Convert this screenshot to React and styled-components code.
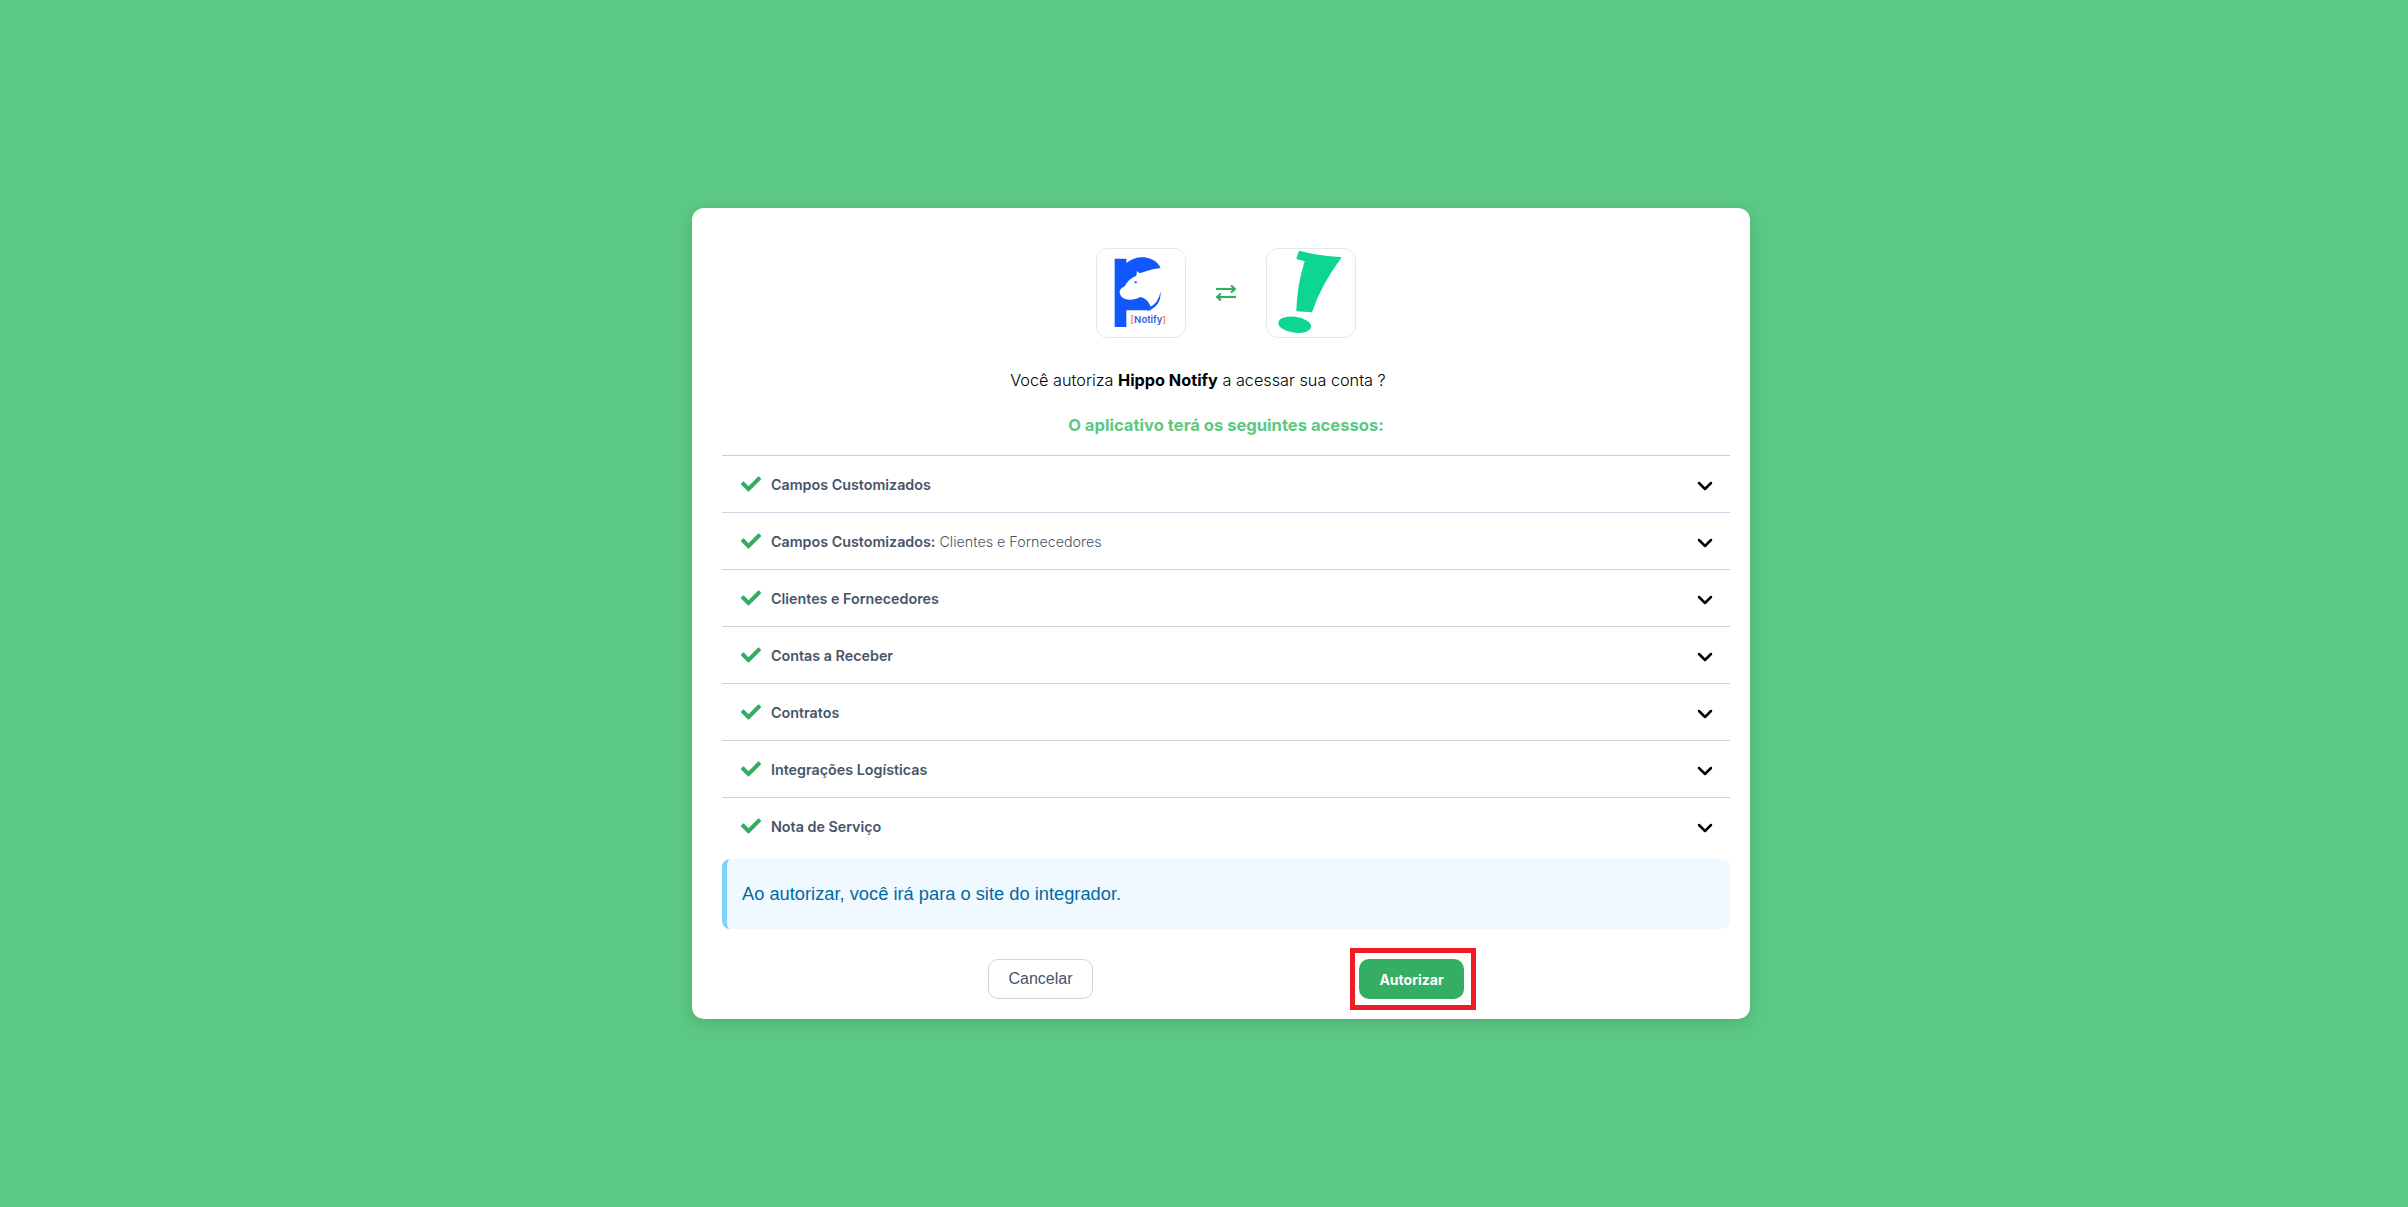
import React from 'react';
import styled, { createGlobalStyle } from 'styled-components';
import { FaCheck } from 'react-icons/fa';
import { ChevronDown } from 'lucide-react';

const GlobalStyle = createGlobalStyle`
  html, body {
    margin: 0;
    padding: 0;
    background: #5bc884;
  }
  * {
    box-sizing: border-box;
  }
`;

const permissions = [
  { title: 'Campos Customizados' },
  { title: 'Campos Customizados:', detail: 'Clientes e Fornecedores' },
  { title: 'Clientes e Fornecedores' },
  { title: 'Contas a Receber' },
  { title: 'Contratos' },
  { title: 'Integrações Logísticas' },
  { title: 'Nota de Serviço' },
];

const HippoLogo = () => (
  <svg width="88" height="88" viewBox="0 0 88 88">
    <g transform="translate(-1 -1) scale(0.3333) translate(-109 -55)">
      <path
        fill="#1058fb"
        d="M165 87 L200 87 L200 100 Q225 80 255 83 Q290 88 303 115 Q275 118 250 128 Q240 132 236 128 L232 124 L230 138 Q205 148 195 170 Q178 178 180 190 Q185 212 215 210 Q232 208 242 202 Q262 205 272 228 L272 242 L200 242 L200 292 L165 292 Z"
      />
      <path fill="#1058fb" d="M303 186 Q304 232 262 244 L270 232 Q295 222 303 186 Z" />
      <ellipse cx="228" cy="158" rx="4" ry="3" fill="#1058fb" />
    </g>
    <text x="33.5" y="73.5" fontFamily="Inter, sans-serif" fontSize="9.6" fontWeight="600" fill="#2f62e0">
      <tspan fill="#f58a52">[</tspan>Notify<tspan fill="#f58a52">]</tspan>
    </text>
  </svg>
);

const BangLogo = () => (
  <svg width="88" height="88" viewBox="0 0 88 88">
    <path
      fill="#0dd690"
      d="M32 1.7 Q52 7 74.7 8.3 Q54 36 45 63.3 L29.3 62.3 Q30 36 37.7 12.3 L29.3 10 Z"
    />
    <ellipse cx="27.7" cy="75.7" rx="16.5" ry="8" transform="rotate(8 27.7 75.7)" fill="#0dd690" />
  </svg>
);

const SwapIcon = () => (
  <svg width="20" height="16" viewBox="0 0 20 16" fill="none" stroke="#34ad62" strokeWidth="2.2">
    <path d="M0 4 H19" />
    <path d="M15 0.5 L19 4 L15 7.5" />
    <path d="M20 12 H1" />
    <path d="M5 8.5 L1 12 L5 15.5" />
  </svg>
);

const Page = styled.main`
  min-height: 100vh;
  padding: 208px 0 0 692px;
`;

const Card = styled.section`
  width: 1058px;
  height: 811px;
  padding: 40px 20px 20px 30px;
  background: #fff;
  border-radius: 12px;
  box-shadow: 0 4px 14px rgba(0, 0, 0, 0.12);
`;

const Logos = styled.div`
  display: flex;
  justify-content: center;
  align-items: center;
  gap: 30px;
`;

const LogoBox = styled.div`
  width: 90px;
  height: 90px;
  border: 1px solid #e2e8f0;
  border-radius: 12px;
`;

const Question = styled.p`
  margin: 30px 0 0;
  padding-right: 56px;
  font: 300 16.25px/24px Inter, sans-serif;
  text-align: center;
  color: #000;

  strong {
    font-weight: 700;
  }
`;

const Heading = styled.h2`
  margin: 21px 0 18px;
  font: 700 16.6px/24px Inter, sans-serif;
  text-align: center;
  color: #5bc884;
`;

const List = styled.ul`
  margin: 0;
  padding: 0;
  list-style: none;
`;

const Row = styled.li`
  display: flex;
  align-items: center;
  height: 57px;
  padding: 0 13px 0 19px;
  border-top: 1px solid ${p => (p.$first ? '#cfcfcf' : '#cbd5e1')};
`;

const Check = styled(FaCheck)`
  flex: none;
  color: #34ad62;
`;

const RowText = styled.span`
  flex: 1;
  margin: 1px 0 0 10px;
  font: 600 14.3px/20px Inter, sans-serif;
  color: #475569;
`;

const Detail = styled.span`
  font-weight: 300;
`;

const Chevron = styled(ChevronDown)`
  flex: none;
  margin-top: 3px;
  color: #000;
`;

const Alert = styled.div`
  display: flex;
  align-items: center;
  height: 70px;
  margin-top: 5px;
  padding-left: 15px;
  background: #f0f9ff;
  border-left: 5px solid #7dd3fc;
  border-radius: 8px;
  font: 400 18.3px/24px "Liberation Sans", Arial, sans-serif;
  color: #0369a1;
`;

const Footer = styled.div`
  display: flex;
  gap: 266px;
  margin-top: 30px;
  padding-left: 266px;
`;

const CancelButton = styled.button`
  width: 105px;
  height: 40px;
  padding: 0;
  background: #fff;
  border: 1px solid #cbd5e1;
  border-radius: 10px;
  font: 400 16px "Liberation Sans", Arial, sans-serif;
  color: #475569;
`;

const AuthorizeWrap = styled.div`
  position: relative;
`;

const AuthorizeButton = styled.button`
  width: 105px;
  height: 40px;
  padding: 0;
  background: #33ae62;
  border: 0;
  border-radius: 10px;
  font: 700 14px Inter, sans-serif;
  color: #fff;
`;

const Highlight = styled.span`
  position: absolute;
  top: -11px;
  right: -12px;
  bottom: -11px;
  left: -9px;
  border: 5px solid #ee1c25;
  pointer-events: none;
`;

export default function App() {
  return (
    <Page>
      <GlobalStyle />
      <Card>
        <Logos>
          <LogoBox>
            <HippoLogo />
          </LogoBox>
          <SwapIcon />
          <LogoBox>
            <BangLogo />
          </LogoBox>
        </Logos>
        <Question>
          Você autoriza <strong>Hippo Notify</strong> a acessar sua conta ?
        </Question>
        <Heading>O aplicativo terá os seguintes acessos:</Heading>
        <List>
          {permissions.map((item, i) => (
            <Row key={item.title + i} $first={i === 0}>
              <Check size={20} />
              <RowText>
                {item.title}
                {item.detail && <Detail> {item.detail}</Detail>}
              </RowText>
              <Chevron size={24} strokeWidth={2.5} />
            </Row>
          ))}
        </List>
        <Alert>Ao autorizar, você irá para o site do integrador.</Alert>
        <Footer>
          <CancelButton>Cancelar</CancelButton>
          <AuthorizeWrap>
            <AuthorizeButton>Autorizar</AuthorizeButton>
            <Highlight />
          </AuthorizeWrap>
        </Footer>
      </Card>
    </Page>
  );
}
